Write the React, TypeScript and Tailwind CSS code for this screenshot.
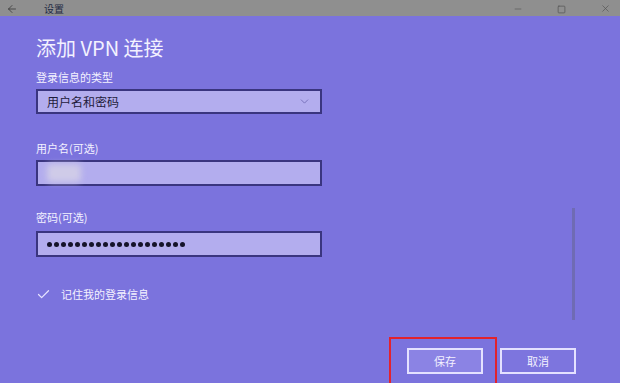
import React from 'react';
import { ArrowLeft, Minus, Square, X, ChevronDown, Check } from 'lucide-react';

const font = { fontFamily: '"Noto Sans CJK SC", "Noto Sans", sans-serif' };

const Field: React.FC<{ children?: React.ReactNode; className?: string }> = ({ children, className }) => (
  <div
    className={
      'flex items-center w-[286px] border-2 border-[#3a357f] bg-[#b3adee] px-[9px] text-[12px] text-[#1e1b3a] ' +
      (className || '')
    }
  >
    {children}
  </div>
);

export default function App() {
  return (
    <div className="w-[620px] h-[383px] overflow-hidden flex flex-col bg-[#7b73dd]" style={font}>
      {/* title bar */}
      <div className="h-[16px] bg-[#8f8f8f] flex items-end text-[#333] relative overflow-hidden">
        <ArrowLeft className="w-[12px] h-[12px] ml-[6px] mb-[1px]" strokeWidth={1.5} />
        <span className="ml-[26px] text-[10px] leading-[14px] text-[#1f2a44]">设置</span>
        <div className="ml-auto flex items-end mb-[2px] text-[#555]">
          <Minus className="w-[10px] h-[10px] mr-[34px]" strokeWidth={1.5} />
          <Square className="w-[9px] h-[9px] mr-[34px]" strokeWidth={2} />
          <X className="w-[11px] h-[11px] mr-[9px]" strokeWidth={1.5} />
        </div>
      </div>

      {/* content */}
      <div className="flex-1 relative">
        <div className="pl-[36px] pt-[20px] flex flex-col text-[#f3f1ff]">
          <h1 className="text-[20px] leading-[24px] font-normal">添加 VPN 连接</h1>

          <div className="mt-[10px] text-[11px] leading-[14px]">登录信息的类型</div>
          <Field className="mt-[5px] h-[25px] justify-between">
            <span>用户名和密码</span>
            <ChevronDown className="w-[13px] h-[13px] text-[#6c66b0]" strokeWidth={1.5} />
          </Field>

          <div className="mt-[27px] text-[11px] leading-[14px]">用户名(可选)</div>
          <Field className="mt-[5px] h-[26px] px-[2px]">
            <span className="w-[34px] h-[18px] bg-[#cfcbe8] blur-[3px] rounded-sm" />
          </Field>

          <div className="mt-[24px] text-[11px] leading-[14px]">密码(可选)</div>
          <Field className="mt-[7px] h-[26px]">
            <div className="flex gap-[2px]">
              {Array.from({ length: 20 }).map((_, i) => (
                <span key={i} className="w-[5px] h-[5px] rounded-full bg-[#15132a]" />
              ))}
            </div>
          </Field>

          <div className="mt-[29px] h-[16px] flex items-center">
            <Check className="w-[15px] h-[15px] text-[#e6e3ff]" strokeWidth={2} />
            <span className="ml-[10px] text-[11px] leading-[14px]">记住我的登录信息</span>
          </div>

          <div className="mt-[46px] flex justify-end pr-[44px] gap-[17px] text-[11px]">
            <button className="w-[76px] h-[26px] border-2 border-[#e4e1ff] bg-[#8b83e4] text-[#f3f1ff]">保存</button>
            <button className="w-[76px] h-[26px] border-2 border-[#e4e1ff] bg-[#7d75de] text-[#f3f1ff]">取消</button>
          </div>
        </div>

        {/* scrollbar */}
        <div className="absolute left-[572px] top-[192px] w-[3px] h-[112px] bg-[#6f6bb4]" />

        {/* red highlight */}
        <div className="absolute left-[389px] top-[321px] w-[108px] h-[70px] border-2 border-[#e3222c]" />
      </div>
    </div>
  );
}
